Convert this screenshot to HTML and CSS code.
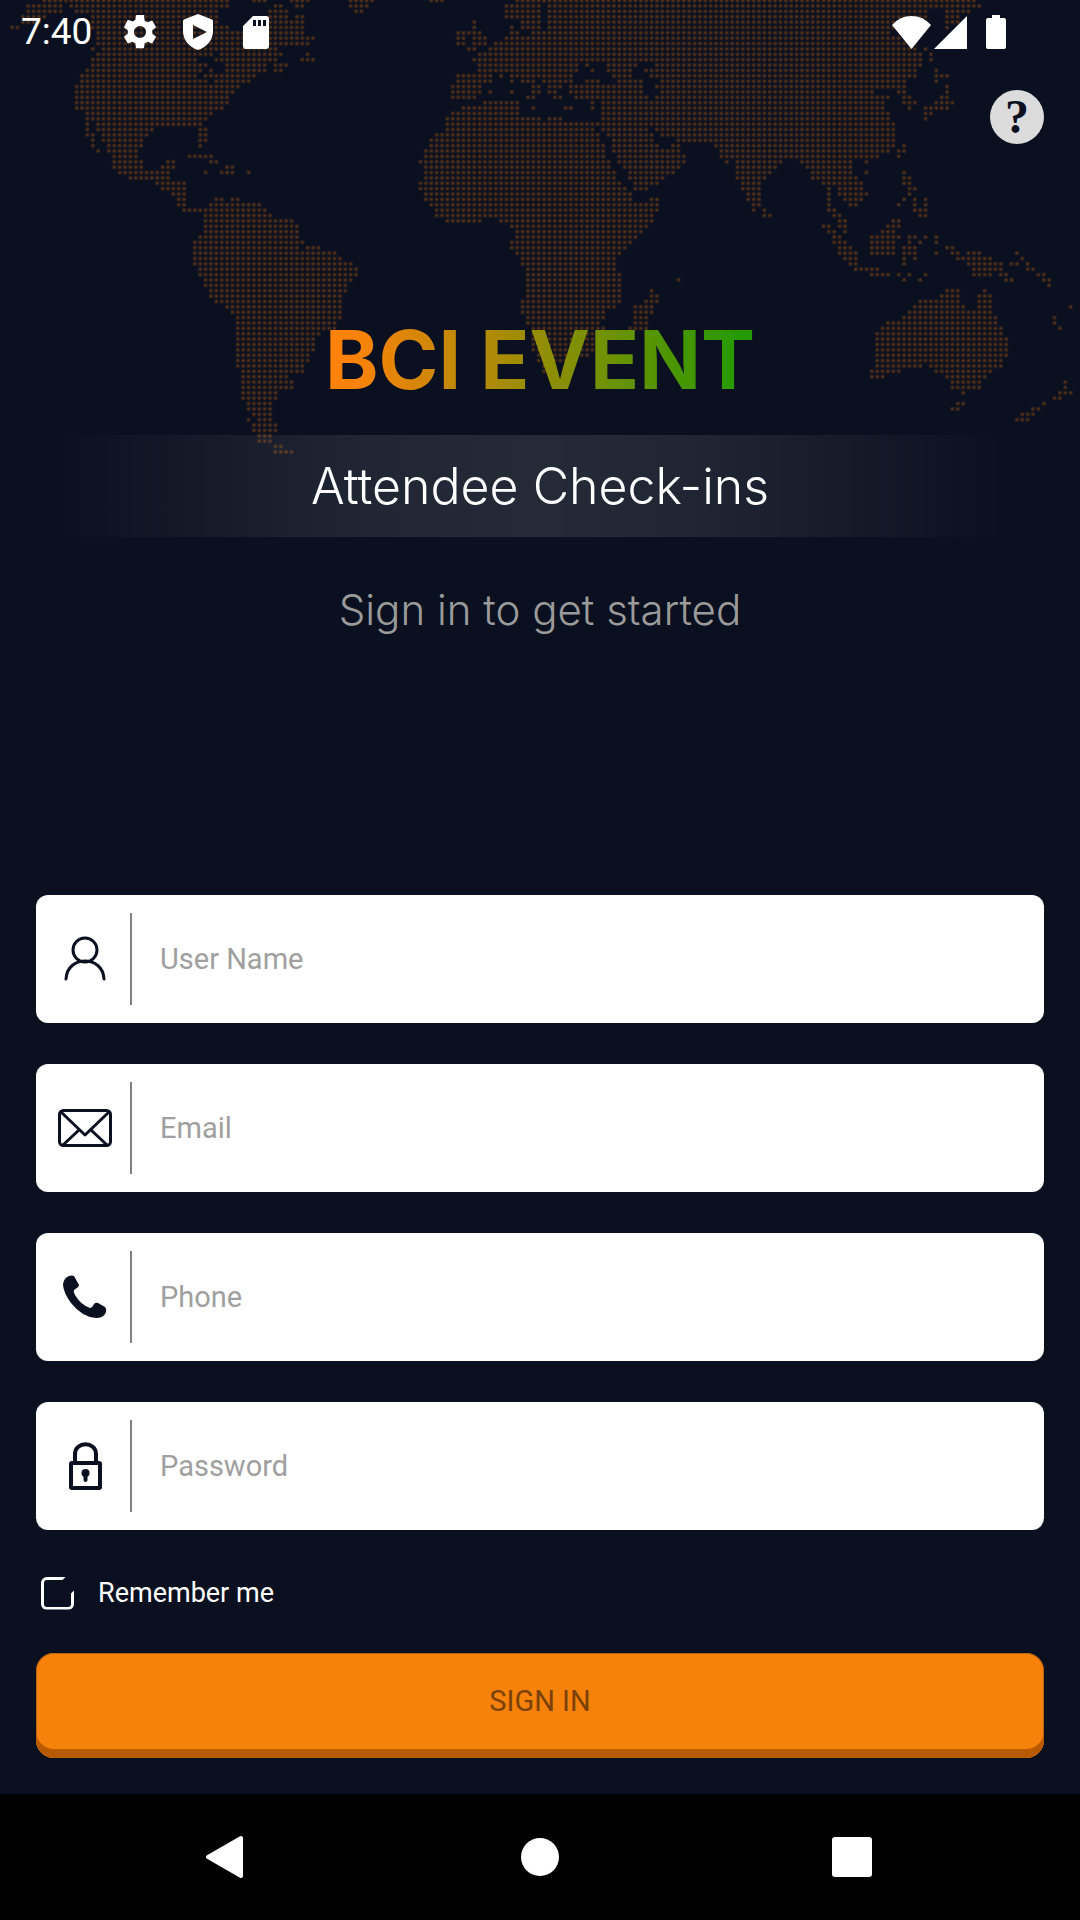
FILE: index.html
```html
<!DOCTYPE html>
<html lang="en">
<head>
<meta charset="utf-8">
<meta name="viewport" content="width=device-width, initial-scale=1">
<title>BCI Event - Attendee Check-ins</title>
<link rel="stylesheet" href="styles.css">
</head>
<body>
<div class="screen">
  <svg class="world-map" viewBox="0.24 0.39 201 85" aria-hidden="true">
    <defs>
      <pattern id="dots" width="1" height="1" patternUnits="userSpaceOnUse">
        <rect x="0.12" y="0.12" width="0.76" height="0.76" rx="0.2" fill="#2c1e1a"/>
        <rect x="0.28" y="0.28" width="0.44" height="0.44" rx="0.1" fill="#52301a"/>
      </pattern>
    </defs>
    <path id="land" fill="url(#dots)"/>
  </svg>

  <header class="status-bar">
    <div class="status-left">
      <span class="clock">7:40</span>
      <svg class="status-icon gear" viewBox="2 2 20 20" aria-hidden="true"><path fill="#fff" d="M19.14 12.94c.04-.3.06-.61.06-.94 0-.32-.02-.64-.07-.94l2.03-1.58a.49.49 0 0 0 .12-.61l-1.92-3.32a.49.49 0 0 0-.59-.22l-2.39.96a7 7 0 0 0-1.62-.94l-.36-2.54A.48.48 0 0 0 13.92 2h-3.84a.48.48 0 0 0-.47.41l-.36 2.54c-.59.24-1.13.57-1.62.94l-2.39-.96a.48.48 0 0 0-.59.22L2.74 8.87a.48.48 0 0 0 .12.61l2.03 1.58c-.05.3-.09.63-.09.94s.02.64.07.94l-2.03 1.58a.49.49 0 0 0-.12.61l1.92 3.32c.12.22.37.29.59.22l2.39-.96c.5.38 1.03.7 1.62.94l.36 2.54c.05.24.24.41.48.41h3.84c.24 0 .44-.17.47-.41l.36-2.54a7 7 0 0 0 1.62-.94l2.39.96c.22.08.47 0 .59-.22l1.92-3.32a.48.48 0 0 0-.12-.61zM12 15.6a3.6 3.6 0 1 1 0-7.2 3.6 3.6 0 0 1 0 7.2z"/></svg>
      <svg class="status-icon shield" viewBox="0 0 30 36" aria-hidden="true"><path fill="#fff" fill-rule="evenodd" d="M15 0 29 5.500Q30 6 30 7V17C30 26 24 33 15 36 6 33 0 26 0 17V7Q0 6 1 5.500ZM10 11V25L24 18Z"/></svg>
      <svg class="status-icon card" viewBox="0 0 26 33" aria-hidden="true"><path fill="#fff" fill-rule="evenodd" d="M10 0H23Q26 0 26 3V30Q26 33 23 33H3Q0 33 0 30V10ZM10 4V10H13V4ZM15 4V10H18V4ZM20 4V10H23V4Z"/></svg>
    </div>
    <div class="status-right">
      <svg class="wifi" viewBox="0 0 39 33" aria-hidden="true"><path fill="#fff" d="M0 9Q8 0 19.500 0T39 9L19.500 33Z"/></svg>
      <svg class="signal" viewBox="0 0 33 33" aria-hidden="true"><path fill="#fff" d="M33 0V33H0Z"/></svg>
      <svg class="battery" viewBox="0 0 20 34" aria-hidden="true"><path fill="#fff" d="M6 0H14V3H18Q20 3 20 5V32Q20 34 18 34H2Q0 34 0 32V5Q0 3 2 3H6Z"/></svg>
    </div>
  </header>

  <main class="content">
    <div class="toolbar"><button class="help" type="button" aria-label="Help">?</button></div>
    <div class="intro">
      <h1 class="title"><span class="title-text">BCI EVENT</span></h1>
      <p class="banner">Attendee Check-ins</p>
      <p class="hint">Sign in to get started</p>
    </div>

    <form class="form">
      <label class="field">
        <span class="field-icon"><svg width="54" height="54" viewBox="0 0 54 54" fill="none" stroke="#0a101f" stroke-width="3" stroke-linecap="round" aria-hidden="true"><circle cx="27" cy="18" r="12"/><path d="M8 47C9 23 45 23 46 47"/></svg></span>
        <input class="field-input" type="text" name="username" placeholder="User Name" aria-label="User Name">
      </label>
      <label class="field">
        <span class="field-icon"><svg width="54" height="54" viewBox="0 0 54 54" fill="none" stroke="#0a101f" stroke-width="3" stroke-linejoin="round" aria-hidden="true"><rect x="1.500" y="9.500" width="51" height="35" rx="4"/><path d="M3 11 27 34 51 11M21 29 5 44M33 29 49 44"/></svg></span>
        <input class="field-input" type="email" name="email" placeholder="Email" aria-label="Email">
      </label>
      <label class="field">
        <span class="field-icon"><svg width="54" height="54" viewBox="0 0 54 54" aria-hidden="true"><path fill="#0a101f" d="M11 6Q14 5 16 6L21 15Q21 17 16 20 15 22 17 25 23 35 32 38 34 38 36 34 38 32 40 33L47 37Q49 39 48 42 46 48 38 48 24 47 13 33 5 22 5 14 6 8 11 6Z"/></svg></span>
        <input class="field-input" type="tel" name="phone" placeholder="Phone" aria-label="Phone">
      </label>
      <label class="field">
        <span class="field-icon"><svg width="54" height="54" viewBox="0 0 54 54" fill="none" stroke="#0a101f" stroke-width="4" aria-hidden="true"><rect x="13" y="24" width="29" height="25" rx="1"/><path d="M17 24V15C17 2 38 2 38 15V24"/><circle cx="27.500" cy="34" r="4" fill="#0a101f" stroke="none"/><path d="M27.500 35V41" stroke-linecap="round"/></svg></span>
        <input class="field-input" type="password" name="password" placeholder="Password" aria-label="Password">
      </label>
      <label class="remember">
        <input class="remember-box" type="checkbox" name="remember">
        <span>Remember me</span>
      </label>
      <button class="sign-in" type="submit">SIGN IN</button>
    </form>
  </main>

  <nav class="nav-bar" aria-label="System">
    <button class="nav-button" type="button" aria-label="Back"><svg width="44" height="44" viewBox="0 0 44 44" aria-hidden="true"><path d="M2 22 35 3V41Z" fill="#fff" stroke="#fff" stroke-width="4" stroke-linejoin="round"/></svg></button>
    <button class="nav-button" type="button" aria-label="Home"><svg width="44" height="44" viewBox="0 0 44 44" aria-hidden="true"><circle cx="22" cy="22" r="19" fill="#fff"/></svg></button>
    <button class="nav-button" type="button" aria-label="Recent apps"><svg width="44" height="44" viewBox="0 0 44 44" aria-hidden="true"><rect x="2" y="2" width="40" height="40" rx="3" fill="#fff"/></svg></button>
  </nav>
</div>
<script src="map.js"></script>
</body>
</html>
```
FILE: styles.css
```css
* {
  box-sizing: border-box;
}

body {
  margin: 0;
  background: #0a101f;
  color: #fff;
  font-family: Roboto, "Liberation Sans", sans-serif;
}

button {
  border: 0;
  padding: 0;
  font-family: inherit;
  cursor: pointer;
}

svg {
  display: block;
}

.screen {
  position: relative;
  display: flex;
  flex-direction: column;
  min-height: 100vh;
}

/* Dotted world map behind the header */
.world-map {
  position: absolute;
  top: 0;
  left: 0;
  width: 100%;
  pointer-events: none;
}

.status-bar {
  position: relative;
  display: flex;
  justify-content: space-between;
  align-items: center;
  height: 64px;
  padding: 0 74px 0 21px;
}

.status-left,
.status-right {
  display: flex;
  align-items: center;
}

.clock {
  margin-right: 31px;
  font-size: 37px;
  line-height: 40px;
}

.gear {
  width: 34px;
  height: 34px;
}

.shield {
  width: 30px;
  height: 36px;
  margin: 0 30px 0 26px;
}

.card {
  width: 26px;
  height: 33px;
}

.wifi {
  width: 39px;
  height: 33px;
}

.signal {
  width: 33px;
  height: 33px;
  margin: 0 19px 0 3px;
}

.battery {
  width: 20px;
  height: 34px;
}

.content {
  position: relative;
  display: flex;
  flex: 1;
  flex-direction: column;
  padding: 26px 36px 36px;
}

.toolbar {
  display: flex;
  justify-content: flex-end;
}

.help {
  width: 54px;
  height: 54px;
  border-radius: 50%;
  background: #dcdcdc;
  color: #0a101f;
  font-family: "Liberation Serif", serif;
  font-size: 48px;
  font-weight: 700;
  line-height: 54px;
}

.intro {
  text-align: center;
}

.title {
  margin: 168px 0 0;
  font-family: Inter, sans-serif;
  font-size: 81px;
  font-weight: 700;
  line-height: 96px;
}

.title-text {
  background: linear-gradient(90deg, #ff820a 5%, #249a00 97%);
  background-clip: text;
  -webkit-background-clip: text;
  color: transparent;
}

.banner {
  margin: 27px 0 0;
  background: linear-gradient(90deg, transparent 2%, rgba(255, 255, 255, 0.09) 32%, rgba(255, 255, 255, 0.11) 50%, rgba(255, 255, 255, 0.09) 65%, transparent 96%);
  font-family: Inter, sans-serif;
  font-size: 50px;
  font-weight: 300;
  line-height: 102px;
}

.hint {
  margin: 48px 0 0;
  color: #9b9b9b;
  font-family: Inter, sans-serif;
  font-size: 42px;
  font-weight: 300;
  line-height: 50px;
}

.form {
  display: flex;
  flex-direction: column;
  margin-top: auto;
  padding-top: 48px;
}

.field {
  display: flex;
  height: 128px;
  margin-bottom: 41px;
  padding: 18px 12px 18px 0;
  border-radius: 12px;
  background: #fff;
}

.field-icon {
  display: flex;
  align-items: center;
  width: 96px;
  padding-left: 22px;
  border-right: 2px solid #808080;
}

.field-input {
  flex: 1;
  min-width: 0;
  padding: 0 28px;
  border: 0;
  outline: 0;
  background: transparent;
  color: #0a101f;
  font-family: inherit;
  font-size: 29px;
}

.field-input::placeholder {
  color: #9f9f9f;
  opacity: 1;
}

.remember {
  display: flex;
  align-items: center;
  align-self: flex-start;
  gap: 24px;
  margin: 0 0 38px 5px;
  font-size: 27px;
  line-height: 44px;
}

/* Rounded outline, open at its top right corner */
.remember-box {
  width: 33px;
  height: 33px;
  margin: 0;
  border: 3px solid #fff;
  border-radius: 6px;
  appearance: none;
  clip-path: polygon(0 0, 25px 0, 17px 8px, 25px 22px, 33px 14px, 33px 33px, 0 33px);
}

.remember-box:checked {
  background: #f7820b;
}

.sign-in {
  height: 105px;
  padding-bottom: 9px;
  border-radius: 18px;
  background: #f7820b;
  box-shadow: inset 0 -9px #b85a00, inset 0 0 0 1px #b8640f;
  color: #7b4106;
  font-size: 29px;
}

.nav-bar {
  display: flex;
  height: 126px;
  padding: 0 72px;
  background: #000;
}

.nav-button {
  display: flex;
  flex: 1;
  align-items: center;
  justify-content: center;
  background: transparent;
}
```
FILE: map.js
```js
// Land cells of the world map: one line for each row, as first-last columns.
const rows = `8-42 47-49 54-57 65-69 80-82 96-181
5-11 13-42 51-52 55-56 65-68 94-100 102-182
5-11 14-40 50-53 66-67 94-100 102-172 176-180
4-8 17-40 50-53 55-56 94-97 98-100 102-172 176-178
4-7 17-40 50-56 88 97-100 102-170 176-178
2-3 17-42 50-56 88 95 97-100 102-166 176
18-56 85-89 95-96 99-165
18-58 85-86 88-90 94-167
18-57 85-86 88-90 92-170
17 19-51 87-88 91-170 172
18-39 41-49 50-52 57 89-171 173
17-36 40-51 56-58 88-171 173
17-38 42-49 51-53 89-107 109 113-118 122-171
16-37 39 42-49 51-52 89-107 110 113-117 120-170 174
15-36 38-40 41-47 85-91 93 95-96 97-106 114-117 121-170 174-176
15-38 40-46 85-91 95 97-99 101-106 109-111 115-119 123-168 174
14-44 84-89 99-100 102-104 106-119 122-168 176
14-43 84-89 91 95 99-100 102-103 106-119 123-162 167-168 176
14-42 84-88 98-99 103-104 107-120 122-165 168-169 175-176
14-42 90-96 110 112-164 168-170 174-177
14-41 86-96 99 105-106 110 112-164 169 172-176
16-39 84-96 112-165 172-173
16-38 83-100 102-104 112-165 172
16 18-37 83-166
16 18-28 37-38 83-110 112-120 122-166
16-17 19-27 37-38 81-111 113-121 123-166
17 19-26 37-38 80-111 114-121 126-166
17 20-26 37 80-112 114-122 125-126 133-166 168
18 20-25 79-112 114-126 134-165 167-168
21-25 35-39 79-112 115-127 134-163 167
21-26 31-32 39-40 78-113 115-127 135 137-145 149-158 161
21-26 30-32 42-43 79-113 116-126 137-144 150-158
22-31 38 41-43 46 79-114 117-125 137-143 151-158 161 168
24-31 79-114 117-123 137-142 151-159 168-169
29-34 78-115 118-122 138-141 153-160 168-169
30-34 78-116 118-120 138-141 154 156-160 169-170
32-34 79-117 139-141 154 156-161 169
33-34 40-41 43-44 79-117 121-122 139-141 154 157-160 168 170 172
33-34 39-48 80-122 140-141 154 158-159 167 170 172
34-49 81-122 140 142 154-155 170-172
38-50 81-121 142-143 155-156 171-172
38-54 83-89 93-121 156-157 166-167
38-55 95-120 153-154 156-157 165-167
38-55 96-119 154-155 157 164-166
37-55 96-118 155-156 162-167 169-170 172 174
36-56 95-117 155-157 162-166 169 171 174
36-55 57-59 95-116 156-158 162-166 168-170 176-177
36-62 96-115 156-159 162-166 168-170 174 177-178 180-182 189
36-63 97-114 157-159 168 170 178-184 190
36-65 97-114 158-159 168 180-186 188-189 191
37-66 98-114 159-163 181-186 191-192
37-66 98-115 162-165 167 169 172 181-184 186-187 193-194
38-65 98-115 126 168 171 187-188 194-195
38-64 98-115 195
39-64 98-115 121 176-178 183
39-63 98-115 121-122 175-178 182-184
40-63 97-115 120-122 171-178 182-184
42-63 97-114 118-121 170-179 182-184 199
43-63 97-112 118-121 169-184
44-63 98-112 118-120 168-185 196
44-62 98-111 118-120 165-185 196
44-62 99-112 117-120 164-186 197
44-59 99-111 120 163-186
44-58 99-111 163-187
44-58 99-110 163-187
44-58 99-110 163-187
44-57 100-109 163-187
44-57 100-105 163-186
44-56 101-103 163-171 173-186
45-56 101-102 162-167 174-184
45-53 162-164 176-183
45-54 177-182 198
45-54 177-182 198
45-51 179 197-199
45-51 196-197
46-50 178-179 194
46-50 177-178 192-193
47-50 190-192
46 48-50 189-191
47-51
47-51
48-50
48-50
51-52
51-54`;

const path = rows.split("\n").map((row, y) =>
  row.split(" ").map((run) => {
    const [first, last = first] = run.split("-").map(Number);
    const width = last - first + 1;
    return `M${first} ${y}h${width}v1h-${width}z`;
  }).join("")
).join("");

document.getElementById("land").setAttribute("d", path);
```
